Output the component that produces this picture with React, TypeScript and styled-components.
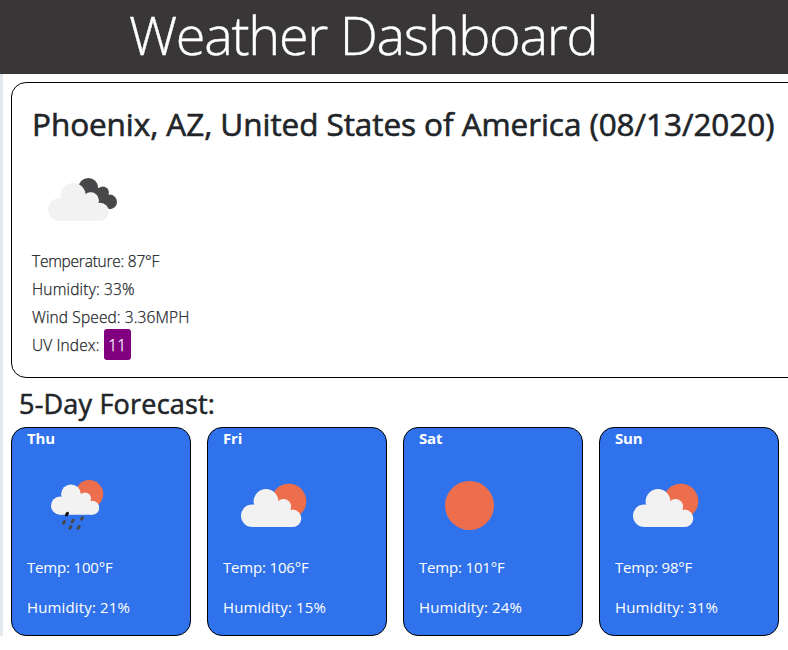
import React from "react";
import styled, { createGlobalStyle } from "styled-components";

const GlobalStyle = createGlobalStyle`
  * { box-sizing: border-box; }
  body {
    margin: 0;
    background: #fff;
    color: #212529;
    font-family: "Open Sans", "Noto Sans", sans-serif;
    font-size: 16px;
  }
  h1, h2, h3, h4, p { margin: 0; }
`;

const Header = styled.header`
  height: 74px;
  padding-left: 129px;
  background: #393637;
`;

const Title = styled.h1`
  color: #fff;
  font-size: 54px;
  font-weight: 300;
  line-height: 69px;
  letter-spacing: -1.3px;
  -webkit-text-stroke: 0.4px #fff;
  white-space: nowrap;
`;

const Main = styled.main`
  height: 562px;
  padding: 8px 0 0 8px;
  border-left: 3px solid #e3e9ec;
  overflow: hidden;
`;

const Current = styled.section`
  width: 900px;
  height: 296px;
  padding: 20px;
  border: 1px solid #000;
  border-radius: 15px;
`;

const City = styled.h2`
  height: 47px;
  font-size: 31.5px;
  font-weight: 400;
  line-height: 42px;
  letter-spacing: -0.07px;
  -webkit-text-stroke: 0.6px #212529;
  white-space: nowrap;
`;

const Icon = styled.svg`
  display: block;
  width: 100px;
  height: 100px;
`;

const Stats = styled.div`
  margin-top: -3px;
`;

const Stat = styled.p<{ $spacing: number }>`
  height: 28px;
  font-size: 15.5px;
  font-weight: 300;
  line-height: 28px;
  letter-spacing: ${(p) => p.$spacing}px;
  -webkit-text-stroke: 0.25px currentColor;
  white-space: nowrap;
`;

const Badge = styled.span`
  display: inline-block;
  height: 31px;
  width: 27px;
  border-radius: 3px;
  background: #800080;
  color: #fff;
  line-height: 33px;
  text-align: center;
  vertical-align: middle;
  margin-top: -5px;
`;

const ForecastTitle = styled.h3`
  height: 49px;
  padding: 8px 0 0 8px;
  font-size: 27px;
  font-weight: 400;
  line-height: 36px;
  letter-spacing: 0.2px;
  -webkit-text-stroke: 0.55px #212529;
`;

const Days = styled.div`
  display: flex;
  gap: 16px;
`;

const Day = styled.article`
  flex: none;
  width: 180px;
  height: 209px;
  padding: 0 15px;
  border: 1px solid #000;
  border-radius: 15px;
  background: #3072eb;
  color: #fff;
`;

const DayName = styled.h4`
  height: 29px;
  font-size: 15px;
  font-weight: 700;
  line-height: 21px;
  letter-spacing: -0.15px;
`;

const Reading = styled.p<{ $spacing: number }>`
  height: 40px;
  font-size: 15px;
  line-height: 21px;
  letter-spacing: ${(p) => p.$spacing}px;
  white-space: nowrap;
`;

const CloudShape = () => (
  <g fill="#f2f2f2">
    <circle cx="29.3" cy="58.7" r="11.3" />
    <circle cx="43" cy="44.5" r="12.4" />
    <circle cx="60.5" cy="49.7" r="7.6" />
    <circle cx="69.6" cy="61.3" r="8.7" />
    <path d="M29.3 70V56L43 48L60 49L69.6 60V70Z" />
  </g>
);

const SunCloud = () => (
  <>
    <circle cx="65.8" cy="44.2" r="17.5" fill="#ec6e4c" />
    <CloudShape />
  </>
);

const drops = [
  [40, 57, "#111"],
  [37, 65.3, "#48484a"],
  [45.7, 64, "#48484a"],
  [55, 61.3, "#48484a"],
  [43.3, 70.3, "#48484a"],
  [51.7, 70.3, "#48484a"],
] as const;

type Sky = "overcast" | "rain" | "partly" | "sun";

const SkyIcon = ({ sky }: { sky: Sky }) => (
  <Icon viewBox="0 0 100 100">
    {sky === "overcast" && (
      <>
        <g fill="#48484a">
          <circle cx="56.3" cy="37.7" r="9.8" />
          <circle cx="70.8" cy="42.6" r="6.1" />
          <circle cx="77.7" cy="51.9" r="7.3" />
          <path d="M56 47L62 36L73 41L77 48L76 59L66 54Z" />
        </g>
        <g transform="translate(-1.8 .8)">
          <circle cx="60.5" cy="49.7" r="8.2" fill="#fff" />
          <circle cx="69.6" cy="61.3" r="9.3" fill="#fff" />
          <CloudShape />
        </g>
      </>
    )}
    {sky === "partly" && <SunCloud />}
    {sky === "rain" && (
      <>
        <g transform="translate(9.6 1.7) scale(.8)">
          <SunCloud />
        </g>
        {drops.map(([x, y, color]) => (
          <path
            key={`${x}-${y}`}
            d={`M${x + 0.5} ${y - 0.7}L${x - 0.5} ${y + 0.9}`}
            stroke={color}
            strokeWidth="3"
            strokeLinecap="round"
          />
        ))}
      </>
    )}
    {sky === "sun" && <circle cx="50.5" cy="48.5" r="24.5" fill="#ec6e4c" />}
  </Icon>
);

const days: { name: string; sky: Sky; temp: number; humidity: number }[] = [
  { name: "Thu", sky: "rain", temp: 100, humidity: 21 },
  { name: "Fri", sky: "partly", temp: 106, humidity: 15 },
  { name: "Sat", sky: "sun", temp: 101, humidity: 24 },
  { name: "Sun", sky: "partly", temp: 98, humidity: 31 },
];

export default function App() {
  return (
    <>
      <GlobalStyle />
      <Header>
        <Title>Weather Dashboard</Title>
      </Header>
      <Main>
        <Current>
          <City>Phoenix, AZ, United States of America (08/13/2020)</City>
          <SkyIcon sky="overcast" />
          <Stats>
            <Stat $spacing={-0.24}>Temperature: 87°F</Stat>
            <Stat $spacing={0.18}>Humidity: 33%</Stat>
            <Stat $spacing={0.12}>Wind Speed: 3.36MPH</Stat>
            <Stat $spacing={0.13}>
              UV Index: <Badge>11</Badge>
            </Stat>
          </Stats>
        </Current>
        <ForecastTitle>5-Day Forecast:</ForecastTitle>
        <Days>
          {days.map((day) => (
            <Day key={day.name}>
              <DayName>{day.name}</DayName>
              <SkyIcon sky={day.sky} />
              <Reading $spacing={-0.18}>Temp: {day.temp}°F</Reading>
              <Reading $spacing={0.15}>Humidity: {day.humidity}%</Reading>
            </Day>
          ))}
        </Days>
      </Main>
    </>
  );
}
